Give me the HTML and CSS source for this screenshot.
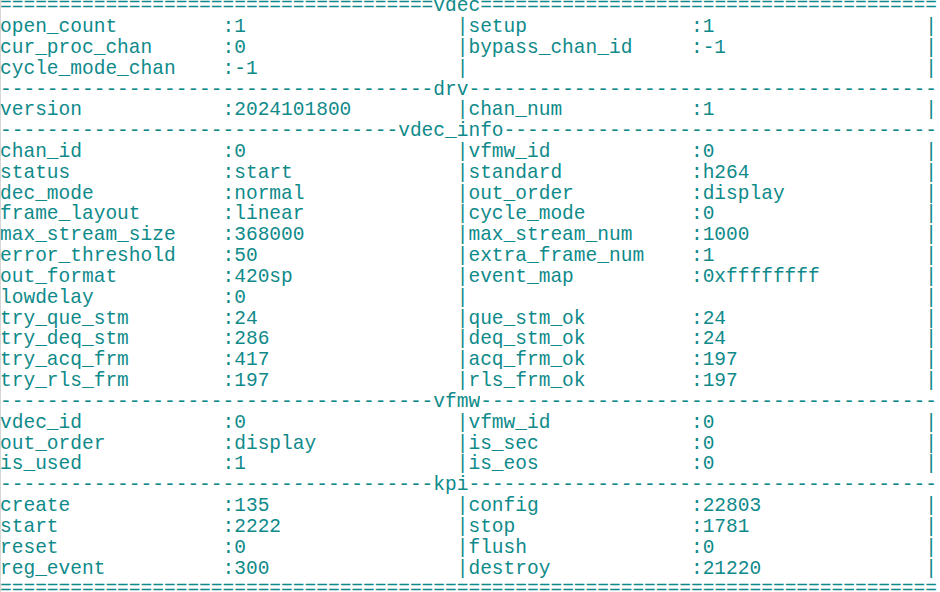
FILE: index.html
```html
<!DOCTYPE html>
<html lang="en">
<head>
<meta charset="utf-8">
<title>vdec proc</title>
<link rel="stylesheet" href="styles.css">
</head>
<body>
<div class="dump">
  <div class="sep"><span class="fill">=====================================</span><span class="label">vdec</span><span class="fill">=======================================</span></div>
  <div class="row"><span>open_count</span><span>:1</span><span>|</span><span>setup</span><span>:1</span><span>|</span></div>
  <div class="row"><span>cur_proc_chan</span><span>:0</span><span>|</span><span>bypass_chan_id</span><span>:-1</span><span>|</span></div>
  <div class="row"><span>cycle_mode_chan</span><span>:-1</span><span>|</span><span></span><span></span><span>|</span></div>
  <div class="sep"><span class="fill">-------------------------------------</span><span class="label">drv</span><span class="fill">----------------------------------------</span></div>
  <div class="row"><span>version</span><span>:2024101800</span><span>|</span><span>chan_num</span><span>:1</span><span>|</span></div>
  <div class="sep wide"><span class="fill">----------------------------------</span><span class="label">vdec_info</span><span class="fill">-------------------------------------</span></div>
  <div class="row"><span>chan_id</span><span>:0</span><span>|</span><span>vfmw_id</span><span>:0</span><span>|</span></div>
  <div class="row"><span>status</span><span>:start</span><span>|</span><span>standard</span><span>:h264</span><span>|</span></div>
  <div class="row"><span>dec_mode</span><span>:normal</span><span>|</span><span>out_order</span><span>:display</span><span>|</span></div>
  <div class="row"><span>frame_layout</span><span>:linear</span><span>|</span><span>cycle_mode</span><span>:0</span><span>|</span></div>
  <div class="row"><span>max_stream_size</span><span>:368000</span><span>|</span><span>max_stream_num</span><span>:1000</span><span>|</span></div>
  <div class="row"><span>error_threshold</span><span>:50</span><span>|</span><span>extra_frame_num</span><span>:1</span><span>|</span></div>
  <div class="row"><span>out_format</span><span>:420sp</span><span>|</span><span>event_map</span><span>:0xffffffff</span><span>|</span></div>
  <div class="row"><span>lowdelay</span><span>:0</span><span>|</span><span></span><span></span><span>|</span></div>
  <div class="row"><span>try_que_stm</span><span>:24</span><span>|</span><span>que_stm_ok</span><span>:24</span><span>|</span></div>
  <div class="row"><span>try_deq_stm</span><span>:286</span><span>|</span><span>deq_stm_ok</span><span>:24</span><span>|</span></div>
  <div class="row"><span>try_acq_frm</span><span>:417</span><span>|</span><span>acq_frm_ok</span><span>:197</span><span>|</span></div>
  <div class="row"><span>try_rls_frm</span><span>:197</span><span>|</span><span>rls_frm_ok</span><span>:197</span><span>|</span></div>
  <div class="sep"><span class="fill">-------------------------------------</span><span class="label">vfmw</span><span class="fill">---------------------------------------</span></div>
  <div class="row"><span>vdec_id</span><span>:0</span><span>|</span><span>vfmw_id</span><span>:0</span><span>|</span></div>
  <div class="row"><span>out_order</span><span>:display</span><span>|</span><span>is_sec</span><span>:0</span><span>|</span></div>
  <div class="row"><span>is_used</span><span>:1</span><span>|</span><span>is_eos</span><span>:0</span><span>|</span></div>
  <div class="sep"><span class="fill">-------------------------------------</span><span class="label">kpi</span><span class="fill">----------------------------------------</span></div>
  <div class="row"><span>create</span><span>:135</span><span>|</span><span>config</span><span>:22803</span><span>|</span></div>
  <div class="row"><span>start</span><span>:2222</span><span>|</span><span>stop</span><span>:1781</span><span>|</span></div>
  <div class="row"><span>reset</span><span>:0</span><span>|</span><span>flush</span><span>:0</span><span>|</span></div>
  <div class="row"><span>reg_event</span><span>:300</span><span>|</span><span>destroy</span><span>:21220</span><span>|</span></div>
  <div class="sep end"><span class="fill">================================================================================</span></div>
</div>
</body>
</html>
```

FILE: styles.css
```css
html {
  background: #ffffff;
}

body {
  margin: 0;
  height: 592px;
  overflow: hidden;
  box-shadow: inset 1px 0 0 #d6d6d6;
}

.dump {
  width: 80ch;
  margin-top: -3.8px;
  font-family: "Courier New", "Nimbus Mono PS", "Nimbus Mono L", "FreeMono", "Liberation Mono", monospace;
  font-size: 19.53px;
  line-height: 20.84px;
  color: #0f8a8a;
}

.row {
  display: grid;
  grid-template-columns: 19ch 20ch 1ch 19ch 20ch 1ch;
  height: 20.84px;
}

.row > span,
.sep > span {
  white-space: pre;
  overflow: hidden;
}

.sep {
  display: grid;
  grid-template-columns: 37ch max-content 1fr;
  height: 20.84px;
  overflow: hidden;
}

.sep.wide {
  grid-template-columns: 34ch max-content 1fr;
}

.sep.end {
  grid-template-columns: 80ch;
}
```
